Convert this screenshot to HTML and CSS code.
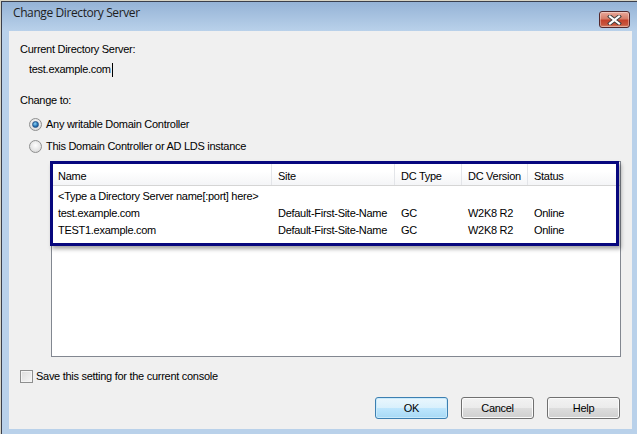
FILE: index.html
```html
<!DOCTYPE html>
<html>
<head>
<meta charset="utf-8">
<link rel="stylesheet" href="styles.css">
</head>
<body>
<div class="window">
  <div class="titlebar">
    <span class="title">Change Directory Server</span>
    <div class="close">
      <svg width="15" height="10" viewBox="0 0 15 10">
        <path d="M3 1.5 L12 8.5 M12 1.5 L3 8.5" stroke="#3b3b3b" stroke-width="4" stroke-linecap="square"/>
        <path d="M3 1.5 L12 8.5 M12 1.5 L3 8.5" stroke="#ffffff" stroke-width="2.2" stroke-linecap="square"/>
      </svg>
    </div>
  </div>
  <div class="client">
    <div class="label first">Current Directory Server:</div>
    <div class="value">test.example.com<span class="caret"></span></div>
    <div class="label change">Change to:</div>
    <div class="radio-row r1"><span class="radio checked"><span class="dot"></span></span><span>Any writable Domain Controller</span></div>
    <div class="radio-row r2"><span class="radio"></span><span>This Domain Controller or AD LDS instance</span></div>
    <div class="listview">
      <div class="lv-header">
        <div class="hc">Name</div>
        <div class="hc">Site</div>
        <div class="hc">DC Type</div>
        <div class="hc">DC Version</div>
        <div class="hc last">Status</div>
      </div>
      <div class="lv-body">
        <div class="lv-row"><div class="c span">&lt;Type a Directory Server name[:port] here&gt;</div></div>
        <div class="lv-row"><div class="c">test.example.com</div><div class="c">Default-First-Site-Name</div><div class="c">GC</div><div class="c">W2K8 R2</div><div class="c">Online</div></div>
        <div class="lv-row"><div class="c">TEST1.example.com</div><div class="c">Default-First-Site-Name</div><div class="c">GC</div><div class="c">W2K8 R2</div><div class="c">Online</div></div>
      </div>
      <div class="highlight"></div>
    </div>
    <div class="check-row"><span class="checkbox"></span><span>Save this setting for the current console</span></div>
    <div class="buttons">
      <div class="btn default">OK</div>
      <div class="btn">Cancel</div>
      <div class="btn">Help</div>
    </div>
  </div>
</div>
</body>
</html>
```
FILE: styles.css
```css
html, body {
  margin: 0;
  padding: 0;
  width: 637px;
  height: 434px;
  overflow: hidden;
  background: #d9d4c4;
}
.window {
  margin: 1px 0 0 1px;
  width: 637px;
  height: 440px;
  border-top: 1px solid #3a3f4c;
  border-left: 1px solid #3a3f4c;
  background: #b9d1ea;
  font-family: "Liberation Sans", Arial, sans-serif;
  font-size: 11px;
  letter-spacing: -0.28px;
  color: #000;
  display: flex;
  flex-direction: column;
}
.titlebar {
  height: 29px;
  background: linear-gradient(#95b3d6, #b9d1ea);
  position: relative;
  display: flex;
  align-items: center;
  padding-left: 11px;
  flex: none;
}
.title {
  font-family: "Open Sans", "Noto Sans", sans-serif;
  font-size: 12px;
  color: #1e1e1e;
  margin-top: -8px;
  letter-spacing: -0.4px;
}
.close {
  position: absolute;
  left: 597px;
  top: 9px;
  width: 29px;
  height: 15px;
  border: 1px solid #53282c;
  border-radius: 3px;
  background: linear-gradient(#e9a99b 0%, #d67d69 45%, #c4412b 55%, #c8563e 85%, #d98a6f 100%);
  box-shadow: inset 0 0 0 1px rgba(255,255,255,0.35);
  display: flex;
  align-items: center;
  justify-content: center;
}
.client {
  margin-left: 7px;
  width: 623px;
  height: 398px;
  background: #f0f0f0;
  padding-left: 11px;
  box-sizing: border-box;
  display: flex;
  flex-direction: column;
  flex: none;
}
.label, .value, .radio-row, .check-row {
  line-height: 13px;
  height: 13px;
  white-space: nowrap;
}
.first { margin-top: 12px; }
.value {
  margin-top: 7px;
  margin-left: 9px;
  display: flex;
  align-items: center;
}
.caret {
  display: inline-block;
  width: 1px;
  height: 14px;
  background: #000;
  margin-left: 1px;
}
.change { margin-top: 18px; }
.radio-row {
  display: flex;
  align-items: center;
  margin-left: 9px;
  height: 14px;
}
.r1 { margin-top: 10px; }
.r2 { margin-top: 8px; }
.radio {
  width: 11px;
  height: 11px;
  border: 1px solid #8e8f8f;
  border-radius: 50%;
  background: radial-gradient(circle at 50% 40%, #fdfdfd 0%, #e6e6e6 55%, #cfcfcf 100%);
  margin-right: 4px;
  display: flex;
  align-items: center;
  justify-content: center;
  flex: none;
}
.dot {
  width: 5px;
  height: 5px;
  border-radius: 50%;
  background: radial-gradient(circle at 40% 35%, #8fd3f7 0%, #1f6fb0 60%, #0f4a86 100%);
  border: 1px solid #27548a;
}
.listview {
  margin-top: 8px;
  margin-left: 31px;
  width: 570px;
  height: 196px;
  border: 1px solid #828790;
  background: #fff;
  box-sizing: border-box;
  position: relative;
  flex: none;
}
.lv-header {
  display: grid;
  grid-template-columns: 220px 123px 67px 66px 1fr;
  height: 23px;
  border-bottom: 1px solid #d5d5d5;
  background: linear-gradient(#ffffff 0%, #ffffff 40%, #f4f5f7 100%);
}
.hc {
  padding: 8px 0 0 6px;
  line-height: 13px;
  border-right: 1px solid #e3e5e9;
  white-space: nowrap;
}
.hc.last { border-right: none; }
.lv-body { padding-top: 2px; }
.lv-row {
  display: grid;
  grid-template-columns: 220px 123px 67px 66px 1fr;
  height: 17px;
  line-height: 17px;
}
.c {
  padding-left: 6px;
  white-space: nowrap;
}
.c.span { grid-column: 1 / span 5; }
.highlight {
  position: absolute;
  left: -2px;
  top: -1px;
  width: 569px;
  height: 85px;
  box-sizing: border-box;
  border: 3px solid #07077e;
  box-shadow: 2px 3px 4px rgba(0,0,0,0.35);
}
.check-row {
  display: flex;
  align-items: center;
  margin-top: 13px;
}
.checkbox {
  width: 11px;
  height: 11px;
  border: 1px solid #8e8f8f;
  background: linear-gradient(135deg, #dcdcdc, #f6f6f6);
  box-shadow: inset 0 0 0 1px #f4f4f4;
  margin-right: 3px;
  flex: none;
}
.buttons {
  margin-top: 14px;
  display: flex;
  justify-content: flex-end;
  gap: 13px;
  padding-right: 12px;
}
.btn {
  width: 73px;
  height: 22px;
  box-sizing: border-box;
  border: 1px solid #707070;
  border-radius: 3px;
  background: linear-gradient(#f2f2f2 0%, #ebebeb 49%, #dddddd 51%, #cfcfcf 100%);
  box-shadow: inset 0 0 0 1px #fbfbfb;
  display: flex;
  align-items: center;
  justify-content: center;
}
.btn.default {
  border-color: #3c7fb1;
  background: linear-gradient(#eaf6fd 0%, #d9f0fc 49%, #bee6fd 51%, #a7d9f5 100%);
  box-shadow: inset 0 0 0 1px #c9eafb;
}
```
